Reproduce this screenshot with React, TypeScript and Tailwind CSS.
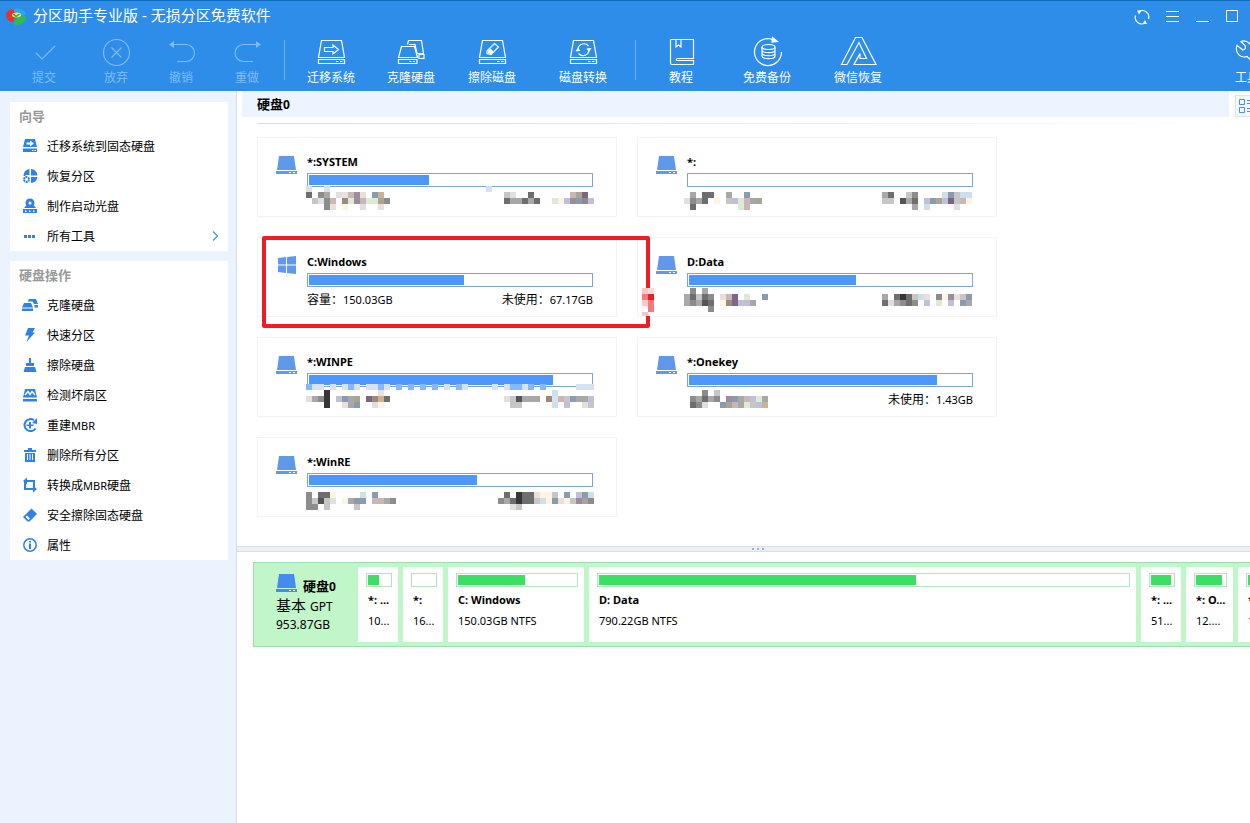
import React from 'react';

// --- Text helper: Latin runs are set one pixel smaller than the Chinese ---
const Mixed: React.FC<{ text: string }> = ({ text }) => (
    <>
        {text.split(/([A-Za-z0-9.]+)/).map((part, i) => (
            i % 2 ? <span key={i} className="text-[11px]">{part}</span> : part
        ))}
    </>
);

// --- Toolbar icons (32x32, thin outline) ---
const Line: React.FC<{ children: React.ReactNode }> = ({ children }) => (
    <svg viewBox="0 0 32 32" className="h-8 w-8 shrink-0 overflow-visible" fill="none" stroke="currentColor" strokeWidth="1.2">{children}</svg>
);

const DriveOutline: React.FC<{ children?: React.ReactNode }> = ({ children }) => (
    <Line>
        <path d="M6.5 4.5H26.5L29.5 21.5H3.5Z M3.5 23.5H29.5V27.5H3.5Z M21 25.5H23.5 M25 25.5H27.5" />
        {children}
    </Line>
);

const icons = {
    commit: <Line><path d="M8 17L14 23L27 10" /></Line>,
    discard: <Line><circle cx="16.5" cy="16.5" r="13" /><path d="M11.5 11.5L21.5 21.5M21.5 11.5L11.5 21.5" /></Line>,
    undo: <Line><path d="M6 8.5H21A8.5 8.5 0 0 1 21 25.5H12" /><path d="M4 8.5L9 5V12Z" fill="currentColor" stroke="none" /></Line>,
    redo: <Line><path d="M27 8.5H12.5A8.5 8.5 0 0 0 12.5 25.5H22" /><path d="M30 8.5L25 5V12Z" fill="currentColor" stroke="none" /></Line>,
    migrate: <DriveOutline><path d="M9.5 11.5H18V9L23.5 13.5L18 18V15.5H9.5Z" /></DriveOutline>,
    clone: (
        <Line>
            <path d="M6.5 10.5H19.5L22.5 21.5H3.5Z M3.5 23.5H22V27.5H3.5Z M14.5 25.5H16.5M18 25.5H20" />
            <path d="M12.5 8.5L13.5 4.5H26.5L28.5 17.5M14 8.5H20L22 17.5H29M24 18.5H29V22.5H24Z" />
        </Line>
    ),
    wipe: <DriveOutline><path d="M11 15L18.5 7.5L22.5 11L15 18.5L11 17.5Z" /><path d="M12 15L14.5 12.5L17.5 15.5L15 18L12 17Z" fill="currentColor" stroke="none" /></DriveOutline>,
    convert: <DriveOutline><path d="M11 12.5A6 6 0 0 1 21.5 10M22 14.5A6 6 0 0 1 11.5 17.5" /><path d="M8.5 15.5L11 11.5L13.5 15ZM19.5 12.5L24.5 12L22 16Z" fill="currentColor" stroke="none" /></DriveOutline>,
    book: <Line><path d="M6 3.5H28.5V22.5H12Q10.5 24.5 12 24.5H28.5V28.5H7Q5.5 28.5 5.5 27V4.5Q5.5 3.5 6 3.5ZM11 3.5V11L13.5 9L16 11V3.5" /></Line>,
    backup: (
        <Line>
            <path d="M23 4A13.5 13.5 0 1 0 30.5 16" />
            <path d="M21.5 1.5L26.5 5.5L21 6Z" fill="currentColor" />
            <ellipse cx="17.5" cy="11" rx="6.5" ry="2.5" />
            <path d="M11 11V20C11 23.5 24 23.5 24 20V11M11 14C11 17.5 24 17.5 24 14M11 17C11 20.5 24 20.500 24 17" />
        </Line>
    ),
    recover: <Line><path d="M-0.5 28.5L13.5 1.5H20L34 28.5H12L18 17.5V22.5H24.500L17 6.500L5 28.500Z" /></Line>,
    wrench: <Line><path d="M10 5.500L14 9.500Q15.500 13 12 14L6 9.500Q4 15 8 19Q11.500 22 16 20.500L24 28Q28 29 28 25L20 17Q22 12 19 8Q15 3.500 10 5.500Z" /></Line>,
};

const toolbar = [
    [
        { label: '提交', icon: icons.commit, width: 'w-[72px]' },
        { label: '放弃', icon: icons.discard, width: 'w-[72px]' },
        { label: '撤销', icon: icons.undo, width: 'w-[58px]' },
        { label: '重做', icon: icons.redo, width: 'w-[74px]' },
    ],
    [
        { label: '迁移系统', icon: icons.migrate, width: 'w-[92px]' },
        { label: '克隆硬盘', icon: icons.clone, width: 'w-[68px]' },
        { label: '擦除磁盘', icon: icons.wipe, width: 'w-[94px]' },
        { label: '磁盘转换', icon: icons.convert, width: 'w-24 pr-2' },
    ],
    [
        { label: '教程', icon: icons.book, width: 'w-[90px]' },
        { label: '免费备份', icon: icons.backup, width: 'w-[82px]' },
        { label: '微信恢复', icon: icons.recover, width: 'w-[100px]' },
    ],
];

// --- Sidebar icons (16x16, solid blue) ---
const Solid: React.FC<{ children: React.ReactNode }> = ({ children }) => (
    <svg viewBox="0 0 16 16" className="h-4 w-4 shrink-0" fill="#2f80e7" stroke="none">{children}</svg>
);

const wizardItems = [
    { label: '迁移系统到固态硬盘', icon: <Solid><path d="M3 1H13L15 9H1ZM1 10.5H15V14H1Z" /><path d="M4.5 4.5H8V2.5L12 5.5L8 8.5V6.5H4.5Z M10 12H11.5V13H10ZM12.5 12H14V13H12.5Z" fill="#fff" /></Solid> },
    { label: '恢复分区', icon: <Solid><path d="M7.5 1V7H4.500L2.500 8H1.500A6.5 6.5 0 0 1 7.5 1ZM9 1A6.5 6.5 0 0 1 15.5 7.5H9ZM9 9H15.5A6.5 6.5 0 0 1 9 15Z" /><circle cx="4.5" cy="11.5" r="2.5" fill="none" stroke="#2f80e7" strokeWidth="2" strokeDasharray="2 0.6" /></Solid> },
    { label: '制作启动光盘', icon: <Solid><path d="M2 10L4 7.5H12L14 10ZM1 11H15V15H1Z" /><circle cx="8" cy="5" r="4.5" /><circle cx="8" cy="5" r="1.5" fill="#fff" /><path d="M3 12.5H4.5V14H3ZM7 12.5H8.5V14H7ZM11 12.5H12.5V14H11Z" fill="#fff" /></Solid> },
    { label: '所有工具', more: true, icon: <Solid><path d="M2 7H5V10H2ZM6 7H9V10H6ZM10 7H13V10H10Z" /></Solid> },
];

const diskItems = [
    { label: '克隆硬盘', icon: <Solid><path d="M2 6H9L11 10.5H0ZM0 11.5H11V14H0ZM5.5 4.5L7 2H14L16 7H12L10.5 4.5ZM12.5 8H16V10.5H12.5Z" /></Solid> },
    { label: '快速分区', icon: <Solid><path d="M6 1H13L10.5 5.5H13L4.5 15L7 8.5H3Z" /></Solid> },
    { label: '擦除硬盘', icon: <Solid><path d="M7 1H9V6H12V9H4V6H7ZM3 10H13L14.5 15H1.5Z" /></Solid> },
    { label: '检测坏扇区', icon: <Solid><path d="M3 2H13L15 10.5H1ZM1 12H15V14.5H1Z" /><path d="M3 8L6 4.5L8 7.5L10 4.5L13 8" fill="none" stroke="#fff" strokeWidth="1.4" /></Solid> },
    { label: '重建MBR', icon: <Solid><path d="M12 3.2A6 6 0 1 0 13.5 11.5" fill="none" stroke="#2f80e7" strokeWidth="2" /><path d="M10 6L15 1V7ZM7 5H9V7.5H11.5V9H9V11.5H7V9H4.5V7.5H7Z" /></Solid> },
    { label: '删除所有分区', icon: <Solid><path d="M6 1H10V3H14V5H2V3H6ZM3 6H13V15H3Z" /><path d="M5.5 7V13M8 7V13M10.5 7V13" stroke="#fff" /></Solid> },
    { label: '转换成MBR硬盘', icon: <Solid><path d="M4 4H12V10M3 5V12H12" fill="none" stroke="#2f80e7" strokeWidth="2" /><path d="M5 0.5V7.500L1 4ZM11 8.500V15.500L15 12Z" /></Solid> },
    { label: '安全擦除固态硬盘', icon: <Solid><path d="M9.5 1.5L15 7L7.5 14.5H5.5L1 10Z" /><path d="M5 8.500L8 11.500L6.5 13L3.500 10Z" fill="#fff" /></Solid> },
    { label: '属性', icon: <Solid><circle cx="8" cy="8" r="6.2" fill="none" stroke="#2f80e7" strokeWidth="1.5" /><path d="M7 4H9V5.5H7ZM7 6.5H9V12H7Z" /></Solid> },
];

const DriveIcon: React.FC<{ color?: string }> = ({ color = '#6199ea' }) => (
    <svg viewBox="0 0 21 18" className="h-[18px] w-[21px] shrink-0" fill={color}>
        <path d="M3 0H18L20 14H1ZM0 15H21V18H0Z" />
        <path d="M13 16H15V17H13ZM17 16H19V17H17Z" fill="#fff" />
    </svg>
);

const WindowsIcon = () => (
    <svg viewBox="0 0 21 18" className="h-[18px] w-[21px] shrink-0" fill="#6199ea">
        <path d="M2 2L10 1V8.5H2ZM11 1L20 0V8.5H11ZM2 9.5H10V17L2 16ZM11 9.5H20V18L11 17Z" />
    </svg>
);

// --- Pixelated captions: one letter per 6px block ---
const tones: Record<string, string> = {
    a: '#e0e0e0', b: '#c6c6c6', c: '#a8a8a8', d: '#8c8c8c', e: '#6e6e6e', f: '#545454', g: '#363636',
    h: '#d6e2f2', u: '#86b8ff', L: '#cfdfea', B: '#8c9aae', V: '#c0c0d8', M: '#9b8c9f', N: '#7c6684',
    P: '#cbb6b6', i: '#ecdeda', T: '#c8b494', K: '#9c8a7c', Y: '#a8a496', W: '#fff4e2', G: '#dcead6',
    r: '#ee1c25', s: '#f47a80', t: '#f9c6c9',
};

const Mosaic: React.FC<{ rows: string[]; place: string }> = ({ rows, place }) => (
    <svg width="288" height={rows.length * 6} className={`absolute ${place}`} shapeRendering="crispEdges" aria-hidden="true">
        {rows.map((row, y) => [...row].map((tone, x) => (
            tones[tone] && <rect key={`${x}-${y}`} x={x * 6} y={y * 6} width="6" height="6" fill={tones[tone]} />
        )))}
    </svg>
);

interface Volume {
    name: string;
    used: number;
    system?: boolean;
    size?: string;
    free?: string;
    place?: string;
    rows?: string[];
}

const volumes: Volume[] = [
    {
        name: '*:SYSTEM', used: 42.5, place: 'left-12 top-12',
        rows: [
            'h..h..........................h',
            'e.dc.aiPMi.BT....................ba..e......PYN',
            '.badP.KGMPGGYd...................eccece..GWVMBdV',
            '...di.W..a..i',
        ],
    },
    {
        name: '*:', used: 0, place: 'left-[46px] top-[54px]',
        rows: [
            '.c.ee..c..B......................ce..bd....LBbLL',
            'adce.W.bVGPcY....................bb.fce.VBYVNbPW',
            '.e.......GP...........................c.L....a',
        ],
    },
    { name: 'C:Windows', used: 55, system: true, size: '容量：150.03GB', free: '未使用：67.17GB' },
    {
        name: 'D:Data', used: 59.2, place: 'left-[46px] top-[50px]',
        rows: [
            '.d.c',
            'cebed.iPN.G..B...................c.egebLi.dWMibB',
            'cdcfe.WKNVVc.....................eacded.V.G.V.Bc',
            '....d',
        ],
    },
    {
        name: '*:WINPE', used: 86.5, place: 'left-12 top-[46px]',
        rows: [
            'uhh.h.huh.hhuh.u.u.u.u.h.uh....h.huuhu.u.....hhh',
            '...g........i............................L',
            'acdg.VBcYkNKTe...................abfccc.KhPbBccV',
            '...g..icB..aW.....................bb.....L.V..ab',
        ],
    },
    {
        name: '*:Onekey', used: 87.9, free: '未使用：1.43GB', place: 'left-[46px] top-[52px]',
        rows: [
            '...d.b',
            '.dcecd.MBcPVGc',
            '.eda..BYPcGbVT',
        ],
    },
    {
        name: '*:WinRE', used: 59.6, place: 'left-12 top-[54px]',
        rows: [
            'd.eeW....L.B.....................e.geeiWWb.B.VBL',
            'dbfba.WcBB.PPcd.................dcegeebLWBiWbMYd',
            'dd.b....b.........................ab',
        ],
    },
];

const VolumeCard: React.FC<{ volume: Volume }> = ({ volume }) => (
    <li className="relative flex h-20 gap-[10px] border border-[#f2f3f6] pr-[23px] pl-[18px]">
        <div className="pt-[18px]">{volume.system ? <WindowsIcon /> : <DriveIcon />}</div>
        <div className="flex-1 pt-4">
            <h3 className="h-4 text-[11px] leading-4 font-bold">{volume.name}</h3>
            <div className="mt-[3px] h-[14px] border border-[#7fa3d6] p-px">
                <div className="h-full bg-[#4c98ff]" style={{ width: `${volume.used}%` }} />
            </div>
            <p className="mt-[5px] flex justify-between text-xs leading-4">
                <span><Mixed text={volume.size ?? ''} /></span>
                <span><Mixed text={volume.free ?? ''} /></span>
            </p>
        </div>
        {volume.rows && volume.place && <Mosaic rows={volume.rows} place={volume.place} />}
        {volume.system && (
            <>
                <div className="pointer-events-none absolute top-[-2px] left-1 z-10 h-[92px] w-[388px] rounded-xs border-4 border-[#ee1c25]" />
                <div className="absolute top-[50px] left-96 z-20 h-7 w-3 overflow-hidden bg-white">
                    <Mosaic rows={['ti', 'sr', 'ts', '.s', 't.']} place="left-0 top-0" />
                </div>
            </>
        )}
    </li>
);

const partitions = [
    { name: '*: ...', info: '10...', used: 50, width: 'w-10' },
    { name: '*:', info: '16...', used: 0, width: 'w-10' },
    { name: 'C: Windows', info: '150.03GB NTFS', used: 57, width: 'w-[136px]' },
    { name: 'D: Data', info: '790.22GB NTFS', used: 60, width: 'min-w-[547px] flex-1' },
    { name: '*: ...', info: '51...', used: 91, width: 'w-10' },
    { name: '*: O...', info: '12....', used: 90, width: 'w-[47px]' },
    { name: '*: ...', info: '16...', used: 60, width: 'w-10' },
];

interface MenuItem {
    label: string;
    icon: React.ReactNode;
    more?: boolean;
}

const Panel: React.FC<{ title: string; items: MenuItem[] }> = ({ title, items }) => (
    <section className="bg-white">
        <h2 className="h-[29px] pl-[9px] text-[13px] leading-[29px] font-bold text-[#999]">{title}</h2>
        <ul>
            {items.map(item => (
                <li key={item.label}>
                    <button className="flex h-[30px] w-full items-center gap-[9px] pr-[9px] pl-3 text-xs">
                        {item.icon}
                        <span className="pt-[2px]"><Mixed text={item.label} /></span>
                        {item.more && (
                            <svg viewBox="0 0 8 10" className="ml-auto h-[10px] w-2" fill="none" stroke="#3b95ea" strokeWidth="1.2"><path d="M2 0.5L6.5 5L2 9.5" /></svg>
                        )}
                    </button>
                </li>
            ))}
        </ul>
    </section>
);

const Header = () => (
    <header className="overflow-hidden border-t border-[#0f6cba] bg-[#2e8de8] text-white">
        <div className="flex h-[31px] items-center pr-[3px] pl-[5px]">
            <svg viewBox="0 0 22 18" className="h-[18px] w-[22px]">
                <path d="M1 7C1 3 5 1 10 2L11 5L7 7L10 9L8 14C4 14 1 11 1 7Z" fill="#e3342b" />
                <path d="M9 1C15 0 21 2 21 7L16 8L13 5L9 4Z" fill="#27a9ee" />
                <path d="M21 8C22 13 17 17 10 17L9 12L15 9Z" fill="#2fbd49" />
                <ellipse cx="11.5" cy="7" rx="4.5" ry="2.5" fill="#f2e36a" />
                <path d="M8.5 6L11 8.5L14.5 6" fill="none" stroke="#37a34a" strokeWidth="1.5" />
            </svg>
            <h1 className="ml-[6px] pb-1 text-[15px] leading-5">分区助手专业版 - 无损分区免费软件</h1>
            <div className="ml-auto flex">
                <button className="flex h-7 w-[30px] items-center justify-center" aria-label="刷新">
                    <svg viewBox="0 0 16 16" className="h-4 w-4" fill="none" stroke="currentColor" strokeWidth="1.2">
                        <path d="M5 2.5A6.5 6.5 0 0 1 14.500 10M11 14A6.5 6.5 0 0 1 1.500 6.5" />
                        <path d="M3 1.5H7.5L5 5.500ZM13 15H8.5L11 11Z" fill="currentColor" stroke="none" />
                    </svg>
                </button>
                <button className="flex h-7 w-[30px] items-center justify-center" aria-label="菜单">
                    <svg viewBox="0 0 14 14" className="h-[14px] w-[14px]" stroke="currentColor"><path d="M1 1.5H14M1 6.500H14M1 11.500H14" /></svg>
                </button>
                <button className="flex h-7 w-[30px] items-center justify-center" aria-label="最小化">
                    <svg viewBox="0 0 14 14" className="h-[14px] w-[14px]" stroke="currentColor"><path d="M1 11.500H14" /></svg>
                </button>
                <button className="flex h-7 w-[30px] items-center justify-center" aria-label="最大化">
                    <svg viewBox="0 0 14 14" className="h-[14px] w-[14px]" fill="none" stroke="currentColor"><path d="M1.5 0.5H12.5V11.500H1.5Z" /></svg>
                </button>
            </div>
        </div>
        <nav className="flex h-[59px] pl-2">
            {toolbar.map((group, i) => (
                <React.Fragment key={i}>
                    {i > 0 && <div className="mt-2 h-10 w-px bg-[#6cb1f3]" />}
                    {group.map(tool => (
                        <button
                            key={tool.label}
                            disabled={i === 0}
                            className={`flex shrink-0 flex-col items-center pt-1 text-xs disabled:text-[#7fbcf4] ${tool.width}`}
                        >
                            {tool.icon}
                            <span className="leading-5">{tool.label}</span>
                        </button>
                    ))}
                </React.Fragment>
            ))}
            <button className="-mr-[9px] ml-auto flex w-6 shrink-0 flex-col items-center pt-1 text-xs">
                {icons.wrench}
                <span className="leading-5">工具</span>
            </button>
        </nav>
    </header>
);

const App: React.FC = () => (
    <div className="flex min-h-screen flex-col bg-white font-['Noto_Sans','Noto_Sans_CJK_SC',sans-serif] text-black">
        <Header />
        <div className="flex flex-1">
            <aside className="flex w-[237px] shrink-0 flex-col gap-[10px] border-r border-[#d3dff0] bg-[#ebf3ff] pt-[11px] pr-2 pl-[10px]">
                <Panel title="向导" items={wizardItems} />
                <Panel title="硬盘操作" items={diskItems} />
            </aside>

            <main className="min-w-0 flex-1 overflow-hidden">
                <div className="flex gap-[6px] pl-[5px]">
                    <h2 className="h-[26px] flex-1 bg-[#ecf4ff] pl-[15px] text-[13px] leading-[26px] font-bold">硬盘<span className="text-xs">0</span></h2>
                    <button className="mt-1 -mr-[9px] flex h-[22px] w-6 items-center justify-center border border-[#dfe4ec] bg-[#f3f6fb]" aria-label="视图">
                        <svg viewBox="0 0 16 16" className="h-4 w-4" fill="none" stroke="#4a8fe8"><path d="M0.5 1.5H5.5V6.5H0.5ZM0.5 9.5H5.5V14.5H0.5ZM8 2.5H16M8 5.5H16M8 10.5H16M8 13.5H16" /></svg>
                    </button>
                </div>
                <div className="mt-[6px] ml-5 h-px bg-linear-to-r from-[#d9d9e6] to-white" />
                <ul className="mt-[13px] mb-[29px] ml-5 grid grid-cols-[360px_360px] gap-5">
                    {volumes.map(volume => <VolumeCard key={volume.name} volume={volume} />)}
                </ul>

                <div className="flex h-[6px] items-center justify-center gap-[3px] border-y border-[#d8dfe9] bg-[#ecf1f8] pl-7">
                    {[0, 1, 2].map(i => <span key={i} className="h-[2px] w-[2px] bg-[#a5b0c4]" />)}
                </div>

                <section className="mt-[10px] ml-4 flex h-[85px] gap-[5px] border border-r-0 border-[#a0dcaf] bg-[#c1f6c9] py-1">
                    <div className="w-[99px] shrink-0 pt-[7px] pl-[22px]">
                        <div className="flex gap-[6px]">
                            <DriveIcon color="#448bee" />
                            <h3 className="pt-1 text-[13px] leading-4 font-bold whitespace-nowrap">硬盘<span className="text-xs">0</span></h3>
                        </div>
                        <p className="text-[15px] leading-5">基本 <span className="text-xs">GPT</span></p>
                        <p className="text-xs leading-5">953.87GB</p>
                    </div>
                    {partitions.map((part, i) => (
                        <div key={i} className={`shrink-0 bg-white pt-[6px] pr-[6px] pl-2 ${part.width}`}>
                            <div className="h-[14px] border border-[#b4e3c0] p-px">
                                <div className="h-full bg-[#3bdf62]" style={{ width: `${part.used}%` }} />
                            </div>
                            <h4 className="mt-[5px] pl-[2px] text-[11px] leading-4 font-bold whitespace-nowrap">{part.name}</h4>
                            <p className="mt-[5px] pl-[2px] text-[11px] leading-4 whitespace-nowrap">{part.info}</p>
                        </div>
                    ))}
                </section>
            </main>
        </div>
    </div>
);

export default App;
